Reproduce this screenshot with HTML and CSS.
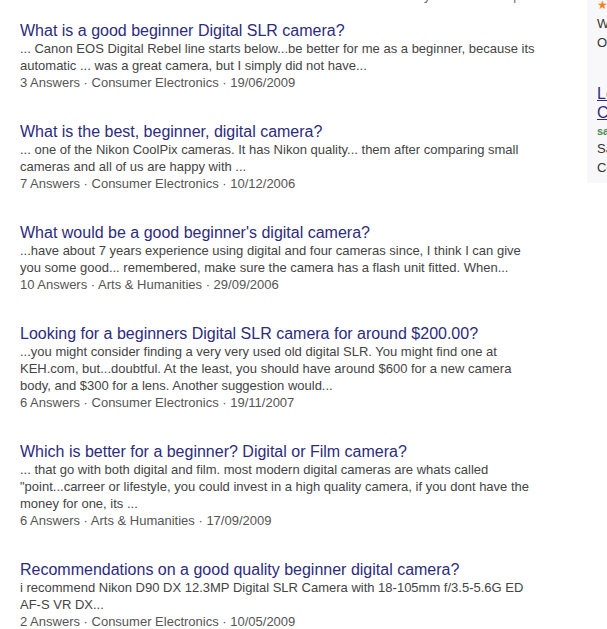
FILE: index.html
```
<!DOCTYPE html>
<html>
	<head>
		<meta charset="UTF-8">
		<title>Search results</title>
		<link rel="stylesheet" href="styles.css">
	</head>
	<body>
		<div id="page">
			<div id="main">
				<div class="sort">Sort By<span class="opt">Relevance</span><span class="sep">|</span><span class="opt last">Time</span></div>
				<ul class="results">
					<li class="result">
						<a class="title" href="#">What is a good beginner Digital SLR camera?</a>
						<p class="snippet">... Canon EOS Digital Rebel line starts below...be better for me as a beginner, because its automatic ... was a great camera, but I simply did not have...</p>
						<p class="meta">3 Answers · Consumer Electronics · 19/06/2009</p>
					</li>
					<li class="result">
						<a class="title" href="#">What is the best, beginner, digital camera?</a>
						<p class="snippet">... one of the Nikon CoolPix cameras. It has Nikon quality... them after comparing small cameras and all of us are happy with ...</p>
						<p class="meta">7 Answers · Consumer Electronics · 10/12/2006</p>
					</li>
					<li class="result">
						<a class="title" href="#">What would be a good beginner's digital camera?</a>
						<p class="snippet">...have about 7 years experience using digital and four cameras since, I think I can give you some good... remembered, make sure the camera has a flash unit fitted. When...</p>
						<p class="meta">10 Answers · Arts &amp; Humanities · 29/09/2006</p>
					</li>
					<li class="result">
						<a class="title" href="#">Looking for a beginners Digital SLR camera for around $200.00?</a>
						<p class="snippet">...you might consider finding a very very used old digital SLR. You might find one at KEH.com, but...doubtful. At the least, you should have around $600 for a new camera body, and $300 for a lens. Another suggestion would...</p>
						<p class="meta">6 Answers · Consumer Electronics · 19/11/2007</p>
					</li>
					<li class="result">
						<a class="title" href="#">Which is better for a beginner? Digital or Film camera?</a>
						<p class="snippet">... that go with both digital and film. most modern digital cameras are whats called "point...carreer or lifestyle, you could invest in a high quality camera, if you dont have the money for one, its ...</p>
						<p class="meta">6 Answers · Arts &amp; Humanities · 17/09/2009</p>
					</li>
					<li class="result">
						<a class="title" href="#">Recommendations on a good quality beginner digital camera?</a>
						<p class="snippet">i recommend Nikon D90 DX 12.3MP Digital SLR Camera with 18-105mm f/3.5-5.6G ED AF&#8209;S VR DX...</p>
						<p class="meta">2 Answers · Consumer Electronics · 10/05/2009</p>
					</li>
				</ul>
			</div>
			<div id="side">
				<div class="stars">★★★★★</div>
				<p class="side-text">What camera should I buy</p>
				<p class="side-text">Other answers</p>
				<a class="side-link" href="#">Learn photography</a>
				<a class="side-link" href="#">Cameras for beginners</a>
				<p class="side-tag">sample</p>
				<p class="side-text">Save on cameras</p>
				<p class="side-text">Compare prices</p>
			</div>
		</div>
	</body>
</html>
```
FILE: styles.css
```
body,div,ul,li,p{
	margin: 0;
	padding: 0;
}
ul{
	list-style: none;
}
a{
	text-decoration: none;
}
body{
	background: #fff;
	font-family: "Liberation Sans", Arial, sans-serif;
	overflow: hidden;
}

#page{
	display: flex;
	width: 607px;
	height: 629px;
	overflow: hidden;
}
#main{
	flex: none;
	width: 587px;
	padding-left: 20px;
	box-sizing: border-box;
}
.sort{
	margin-top: -12px;
	padding-left: 368px;
	font-size: 13px;
	line-height: 16px;
	color: #666;
}
.sort .opt{
	margin-left: 12px;
}
.sort .sep{
	margin-left: 9px;
}
.sort .last{
	margin-left: 10px;
}
.results{
	margin-top: 17px;
}
.result{
	margin-bottom: 31px;
}
.title{
	display: block;
	font-size: 16px;
	line-height: 19px;
	color: #2d2b7d;
}
.snippet{
	width: 522px;
	font-size: 13px;
	line-height: 17px;
	color: #444;
}
.meta{
	font-size: 13px;
	line-height: 17px;
	color: #555;
}

#side{
	flex: none;
	width: 200px;
	height: 183px;
	padding: 0 10px;
	background: #f8f8fb;
	font-size: 13px;
	line-height: 17px;
	color: #333;
}
.stars{
	margin-top: -3px;
	font-size: 12px;
	line-height: 16px;
	color: #f5811f;
}
.side-text{
	margin-top: 2px;
}
.side-link{
	display: block;
	font-size: 16px;
	line-height: 19px;
	color: #2d2b7d;
	text-decoration: underline;
}
.side-text + .side-link{
	margin-top: 33px;
}
.side-tag{
	margin-top: 2px;
	font-size: 11px;
	font-weight: bold;
	line-height: 14px;
	color: #4a8a5a;
}
```
